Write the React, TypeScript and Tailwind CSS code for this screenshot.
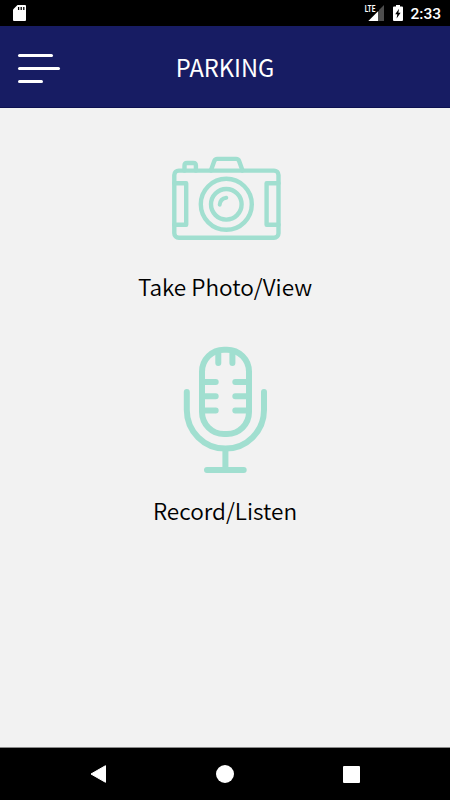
import type { ReactNode } from "react";

function StatusBar() {
  return (
    <div className="flex h-[26px] items-center bg-black pl-[13px] pr-[9px] text-white">
      <svg className="h-4 w-[13px]" viewBox="0 0 13 16">
        <path d="M4.5 0H12a1 1 0 011 1v14a1 1 0 01-1 1H1a1 1 0 01-1-1V4.5z" fill="#fff" />
        <path d="M5.6 2v3M8.2 2v3M10.8 2v3" stroke="#000" strokeWidth="1.3" />
      </svg>

      {/* Signal + battery + clock */}
      <div className="ml-auto flex items-center">
        <svg className="h-4 w-[20px] overflow-visible" viewBox="0 0 20 16">
          <path d="M20 0v16h-5V5z" fill="#4d4d4d" />
          <path d="M14.3 6v10H4.3z" fill="#fff" />
          <text x="0.8" y="7.3" fill="#fff" fontSize="9" fontWeight="700" fontFamily="Roboto, sans-serif" textLength="10.5" lengthAdjust="spacingAndGlyphs">
            LTE
          </text>
        </svg>
        <svg className="ml-[9px] h-4 w-[10px]" viewBox="0 0 10 16">
          <path d="M3 0h4v1.5h2a1 1 0 011 1V15a1 1 0 01-1 1H1a1 1 0 01-1-1V2.5a1 1 0 011-1h2z" fill="#fff" />
          <path d="M6 3.8L2.2 9.2h2.1L3.6 13.6L7.6 7.7H5.4z" fill="#000" />
        </svg>
        <span className="ml-[7px] pt-[3px] font-['Roboto',sans-serif] text-[15.5px] font-medium leading-none">2:33</span>
      </div>
    </div>
  );
}

function Header() {
  return (
    <header className="grid h-[82px] grid-cols-[1fr_auto_1fr] items-center border-b border-[#0d1150] bg-[#171c63] px-[18px]">
      <button className="flex flex-col gap-[10px] pt-[4px]" aria-label="Menu">
        <span className="h-[3px] w-[35px] rounded-full bg-white" />
        <span className="h-[3px] w-[42px] rounded-full bg-white" />
        <span className="h-[3px] w-[25px] rounded-full bg-white" />
      </button>
      <h1 className="text-[23.6px] font-normal leading-[36px] text-white">PARKING</h1>
    </header>
  );
}

function CameraIcon() {
  return (
    <svg className="h-[85px] w-[112px]" viewBox="169 156 112 85" fill="none" stroke="#a1dfd0" strokeWidth="4.4" strokeLinejoin="round" strokeLinecap="round">
      <rect x="174.3" y="170.6" width="104.2" height="67.2" rx="4.5" />
      <path d="M210.9 170.5l3.3-9.3q.8-2.3 3.1-2.3h18.8q2.3 0 3.1 2.3l3.3 9.3" />
      <path d="M184.5 170.500v-5q0-2.500 2.500-2.500h6.400q2.500 0 2.500 2.500v5" />
      <path d="M174.3 183.2h11.900v41.600h-11.900M278.500 183.200h-11.900v41.600h11.900" />
      <circle cx="226.3" cy="204.3" r="25.5" />
      <circle cx="226.3" cy="204.3" r="15.3" />
      <path d="M219.7 204.700q.4-6 6.600-7" strokeWidth="4" />
    </svg>
  );
}

function MicIcon() {
  return (
    <svg className="h-[128px] w-[84px]" viewBox="183 346 84 128" fill="none" stroke="#a1dfd0" strokeWidth="6" strokeLinecap="round">
      <rect x="202" y="349.7" width="47" height="84.3" rx="22" />
      <path d="M218.3 351v12M232.400 351v12" />
      <path d="M203 382.1h12.700M203 396.300h12.700M203 410.400h12.700" />
      <path d="M248 382.1h-12.700M248 396.300h-12.700M248 410.400h-12.700" />
      <path d="M186.8 392v18a38.6 38.6 0 0077.2 0v-18" />
      <path d="M225.4 449v21M207 470.1h36.7" />
    </svg>
  );
}

interface ActionProps {
  icon: ReactNode;
  label: string;
}

function Action({ icon, label }: ActionProps) {
  return (
    <div className="flex flex-col items-center">
      {icon}
      <span className="text-[22.6px] font-[350] leading-[36px] text-black">{label}</span>
    </div>
  );
}

function NavBar() {
  return (
    <nav className="flex h-[53px] items-center justify-between border-t border-[#8a8a8a] bg-black px-[90px]">
      <svg className="h-[18px] w-[16px]" viewBox="0 0 16 18">
        <path d="M15.5.7v16.6L1 9z" fill="#fff" stroke="#fff" strokeLinejoin="round" />
      </svg>
      <span className="h-[18px] w-[18px] rounded-full bg-white" />
      <span className="h-[17px] w-[17px] rounded-[1px] bg-white" />
    </nav>
  );
}

export default function App() {
  return (
    <div className="flex h-[800px] w-[450px] flex-col bg-[#f2f2f2] font-['Noto_Sans_CJK_SC',sans-serif]">
      <StatusBar />
      <Header />
      <main className="flex flex-1 flex-col items-center gap-[41px] pt-[48px]">
        <Action icon={<div className="pb-[28px]"><CameraIcon /></div>} label="Take Photo/View" />
        <Action icon={<div className="pb-[19px]"><MicIcon /></div>} label="Record/Listen" />
      </main>
      <NavBar />
    </div>
  );
}
